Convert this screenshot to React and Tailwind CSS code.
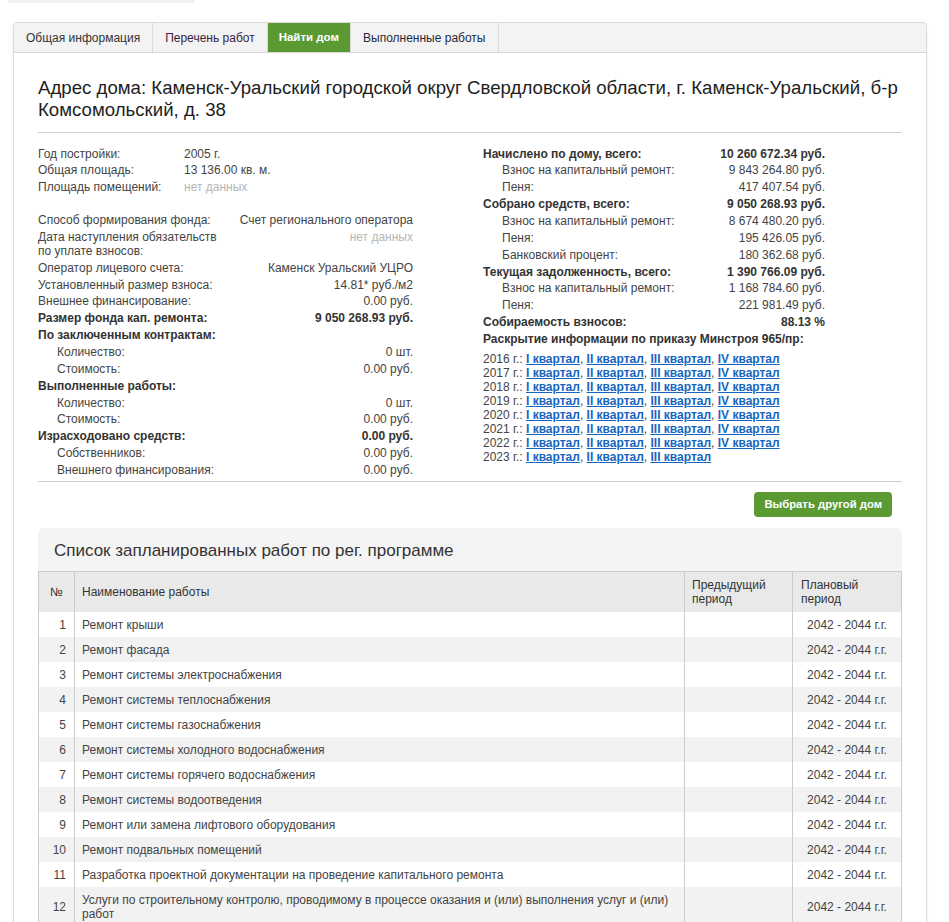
import React from "react";

const tabs = [
  { label: "Общая информация" },
  { label: "Перечень работ", cls: "text-[#3a2340]" },
  { label: "Найти дом", active: true },
  { label: "Выполненные работы", cls: "text-[#1f2a40]" },
];

const basic = [
  ["Год постройки:", "2005 г."],
  ["Общая площадь:", "13 136.00 кв. м."],
  ["Площадь помещений:", "нет данных", true],
];

// t: b = bold, i = indented, n = plain
const fund = [
  ["n", "Способ формирования фонда:", "Счет регионального оператора"],
  ["n", "Дата наступления обязательств по уплате взносов:", "нет данных", true],
  ["n", "Оператор лицевого счета:", "Каменск Уральский УЦРО"],
  ["n", "Установленный размер взноса:", "14.81* руб./м2"],
  ["n", "Внешнее финансирование:", "0.00 руб."],
  ["b", "Размер фонда кап. ремонта:", "9 050 268.93 руб."],
  ["b", "По заключенным контрактам:", ""],
  ["i", "Количество:", "0 шт."],
  ["i", "Стоимость:", "0.00 руб."],
  ["b", "Выполненные работы:", ""],
  ["i", "Количество:", "0 шт."],
  ["i", "Стоимость:", "0.00 руб."],
  ["b", "Израсходовано средств:", "0.00 руб."],
  ["i", "Собственников:", "0.00 руб."],
  ["i", "Внешнего финансирования:", "0.00 руб."],
];

const money = [
  ["b", "Начислено по дому, всего:", "10 260 672.34 руб."],
  ["i", "Взнос на капитальный ремонт:", "9 843 264.80 руб."],
  ["i", "Пеня:", "417 407.54 руб."],
  ["b", "Собрано средств, всего:", "9 050 268.93 руб."],
  ["i", "Взнос на капитальный ремонт:", "8 674 480.20 руб."],
  ["i", "Пеня:", "195 426.05 руб."],
  ["i", "Банковский процент:", "180 362.68 руб."],
  ["b", "Текущая задолженность, всего:", "1 390 766.09 руб."],
  ["i", "Взнос на капитальный ремонт:", "1 168 784.60 руб."],
  ["i", "Пеня:", "221 981.49 руб."],
  ["b", "Собираемость взносов:", "88.13 %"],
];

const years = [2016, 2017, 2018, 2019, 2020, 2021, 2022, 2023];
const quarters = ["I квартал", "II квартал", "III квартал", "IV квартал"];

const works = [
  "Ремонт крыши",
  "Ремонт фасада",
  "Ремонт системы электроснабжения",
  "Ремонт системы теплоснабжения",
  "Ремонт системы газоснабжения",
  "Ремонт системы холодного водоснабжения",
  "Ремонт системы горячего водоснабжения",
  "Ремонт системы водоотведения",
  "Ремонт или замена лифтового оборудования",
  "Ремонт подвальных помещений",
  "Разработка проектной документации на проведение капитального ремонта",
  "Услуги по строительному контролю, проводимому в процессе оказания и (или) выполнения услуг и (или) работ",
];

function Row({ t, label, value, muted, narrow }) {
  return (
    <div className={`flex justify-between py-[1.5px] leading-[13.86px] ${t === "b" ? "font-bold text-[#333]" : "text-[#444]"}`}>
      <div className={`${t === "i" ? "pl-[19px]" : ""} ${narrow ? "max-w-[190px]" : "whitespace-nowrap"}`}>{label}</div>
      <div className={`whitespace-nowrap text-right ${muted ? "text-[#b5b5b5]" : ""}`}>{value}</div>
    </div>
  );
}

export default function App() {
  return (
    <div className="min-h-[922px] bg-white font-['Liberation_Sans',Arial,sans-serif] text-[12px] text-[#333]">
      <div className="ml-[8px] h-[3px] w-[187px] bg-[#f1f1f1]" />
      <div className="mx-[13px] mt-[19px] w-[914px] rounded-[4px] border border-[#dcdcdc] shadow-[0_1px_3px_rgba(0,0,0,0.08)]">
        <div className="flex h-[30px] rounded-t-[4px] border-b border-[#d6d6d6] bg-[#f3f3f3]">
          {tabs.map((tab) => (
            <div
              key={tab.label}
              className={`flex items-center border-r border-[#dadada] ${
                tab.active
                  ? "bg-[#5b9a33] px-[11px] text-[11.5px] font-bold text-white"
                  : `px-[12px] text-[12px] ${tab.cls || "text-[#333]"}`
              }`}
            >
              {tab.label}
            </div>
          ))}
        </div>

        <div className="px-[24px] pt-[24px] pb-[40px]">
          <h1 className="text-[18.65px] leading-[22px] text-[#1e1e1e]">
            Адрес дома: Каменск-Уральский городской округ Свердловской области, г. Каменск-Уральский,{" "}
            <span className="whitespace-nowrap">б-р</span> Комсомольский, д. 38
          </h1>
          <div className="mt-[11px] border-t border-[#cfcfcf]" />

          <div className="mt-[13px] flex">
            <div className="w-[375px]">
              {basic.map(([l, v, m]) => (
                <div key={l} className="flex py-[1.5px] leading-[13.86px] text-[#444]">
                  <div className="w-[146px]">{l}</div>
                  <div className={m ? "text-[#b5b5b5]" : ""}>{v}</div>
                </div>
              ))}
              <div className="h-[16px]" />
              {fund.map(([t, l, v, m], i) => (
                <Row key={i} t={t} label={l} value={v} muted={m} narrow />
              ))}
            </div>

            <div className="ml-[70px] w-[342px]">
              {money.map(([t, l, v], i) => (
                <Row key={i} t={t} label={l} value={v} />
              ))}
              <div className="whitespace-nowrap py-[1.5px] leading-[13.86px] font-bold text-[#333]">
                Раскрытие информации по приказу Минстроя 965/пр:
              </div>
              <div className="mt-[4px] whitespace-nowrap leading-[14px] text-[#444]">
                {years.map((y) => {
                  const qs = y === 2023 ? quarters.slice(0, 3) : quarters;
                  return (
                    <div key={y}>
                      {y} г.:{" "}
                      {qs.map((q, i) => (
                        <React.Fragment key={q}>
                          <a href="#" className="font-bold text-[#1565c0] underline">
                            {q}
                          </a>
                          {i < qs.length - 1 ? ", " : ""}
                        </React.Fragment>
                      ))}
                    </div>
                  );
                })}
              </div>
            </div>
          </div>

          <div className="mt-[2px] border-t border-[#cfcfcf]" />

          <div className="mt-[10px] flex justify-end pr-[10px]">
            <button className="h-[25px] rounded-[4px] bg-[#5b9a33] px-[10px] text-[11.3px] font-bold text-white">
              Выбрать другой дом
            </button>
          </div>

          <div className="mt-[11px] rounded-t-[6px] bg-[#f4f4f4]">
            <h2 className="px-[16px] pt-[12px] pb-[9px] text-[17px] leading-[22px] text-[#333]">
              Список запланированных работ по рег. программе
            </h2>
            <table className="w-full border-collapse border border-[#cccccc] text-[12px] leading-[14px]">
              <thead>
                <tr className="bg-[#e9e9e9] text-left font-normal text-[#333]">
                  <th className="w-[36px] border-r border-[#cccccc] py-[6px] text-center font-normal">№</th>
                  <th className="border-r border-[#cccccc] px-[7px] py-[6px] font-normal">Наименование работы</th>
                  <th className="w-[108px] border-r border-[#cccccc] px-[7px] py-[6px] font-normal">
                    Предыдущий
                    <br />
                    период
                  </th>
                  <th className="w-[109px] px-[8px] py-[6px] font-normal">
                    Плановый
                    <br />
                    период
                  </th>
                </tr>
              </thead>
              <tbody>
                {works.map((w, i) => (
                  <tr key={i} className={i % 2 ? "bg-[#f2f2f2]" : "bg-white"}>
                    <td className="border-r border-[#cccccc] py-[5.5px] pr-[8px] text-right text-[#444]">{i + 1}</td>
                    <td className="border-r border-[#cccccc] px-[7px] py-[5.5px] text-[#444]">{w}</td>
                    <td className="border-r border-[#cccccc]" />
                    <td className="py-[5.5px] text-center text-[#444]">2042 - 2044 г.г.</td>
                  </tr>
                ))}
              </tbody>
            </table>
          </div>
        </div>
      </div>
    </div>
  );
}
